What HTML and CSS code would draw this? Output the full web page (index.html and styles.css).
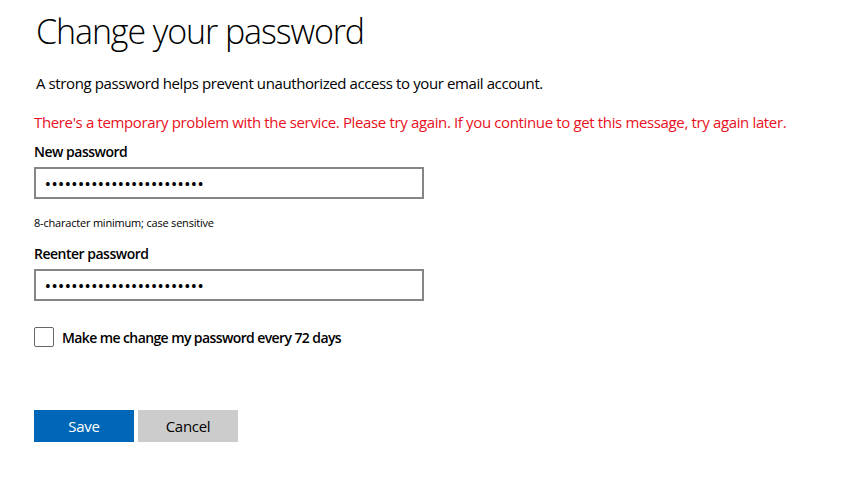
FILE: index.html
```html
<!DOCTYPE html>
<html lang="en">
<head>
<meta charset="utf-8">
<title>Change your password</title>
<link rel="stylesheet" href="styles.css">
</head>
<body>
<main class="page">
  <h1 class="title">Change your password</h1>
  <p class="intro">A strong password helps prevent unauthorized access to your email account.</p>
  <p class="error">There's a temporary problem with the service. Please try again. If you continue to get this message, try again later.</p>
  <form class="form">
    <label class="label" for="pw1">New password</label>
    <input class="field" id="pw1" type="password" value="........................">
    <div class="hint">8-character minimum; case sensitive</div>
    <label class="label label-second" for="pw2">Reenter password</label>
    <input class="field" id="pw2" type="password" value="........................">
    <label class="check">
      <span class="box"></span>
      <span class="check-text">Make me change my password every 72 days</span>
    </label>
    <div class="actions">
      <button type="button" class="btn btn-primary">Save</button>
      <button type="button" class="btn btn-secondary">Cancel</button>
    </div>
  </form>
</main>
</body>
</html>
```
FILE: styles.css
```css
html, body {
  margin: 0;
  padding: 0;
  background: #fff;
}
body {
  font-family: "Open Sans", "Noto Sans", sans-serif;
  color: #000;
}
.page {
  padding: 8px 0 0 34px;
}
.title {
  margin: 0 0 0 2px;
  font-weight: 300;
  font-size: 34px;
  letter-spacing: -1.1px;
  line-height: 46px;
  color: #000;
}
.intro {
  margin: 19px 0 0 2px;
  font-size: 15px;
  letter-spacing: -0.4px;
  line-height: 20px;
}
.error {
  margin: 19px 0 0 0;
  font-size: 15px;
  letter-spacing: -0.36px;
  line-height: 20px;
  color: #e81123;
}
.form {
  display: flex;
  flex-direction: column;
  align-items: flex-start;
}
.label {
  margin-top: 10px;
  font-size: 14px;
  font-weight: 600;
  letter-spacing: -0.5px;
  line-height: 20px;
}
.label-second {
  margin-top: 13px;
}
.field {
  box-sizing: border-box;
  margin-top: 5px;
  width: 390px;
  height: 32px;
  border: 2px solid #868686;
  padding: 0 9px;
  font-family: "Open Sans", sans-serif;
  font-size: 15px;
  font-weight: 600;
  letter-spacing: 1px;
  outline: none;
}
.hint {
  margin-top: 16px;
  font-size: 11px;
  letter-spacing: -0.2px;
  line-height: 16px;
}
.check {
  margin-top: 26px;
  display: flex;
  align-items: center;
  gap: 8px;
}
.box {
  box-sizing: border-box;
  width: 20px;
  height: 20px;
  border: 1px solid #666;
  border-radius: 2px;
}
.check-text {
  font-size: 14px;
  font-weight: 600;
  letter-spacing: -0.6px;
}
.actions {
  margin-top: 63px;
  display: flex;
  gap: 4px;
}
.btn {
  width: 100px;
  height: 32px;
  border: none;
  font-family: "Open Sans", sans-serif;
  font-size: 15px;
  letter-spacing: -0.3px;
  padding: 0;
}
.btn-primary {
  background: #0067b8;
  color: #fff;
}
.btn-secondary {
  background: #cccccc;
  color: #000;
}
```
